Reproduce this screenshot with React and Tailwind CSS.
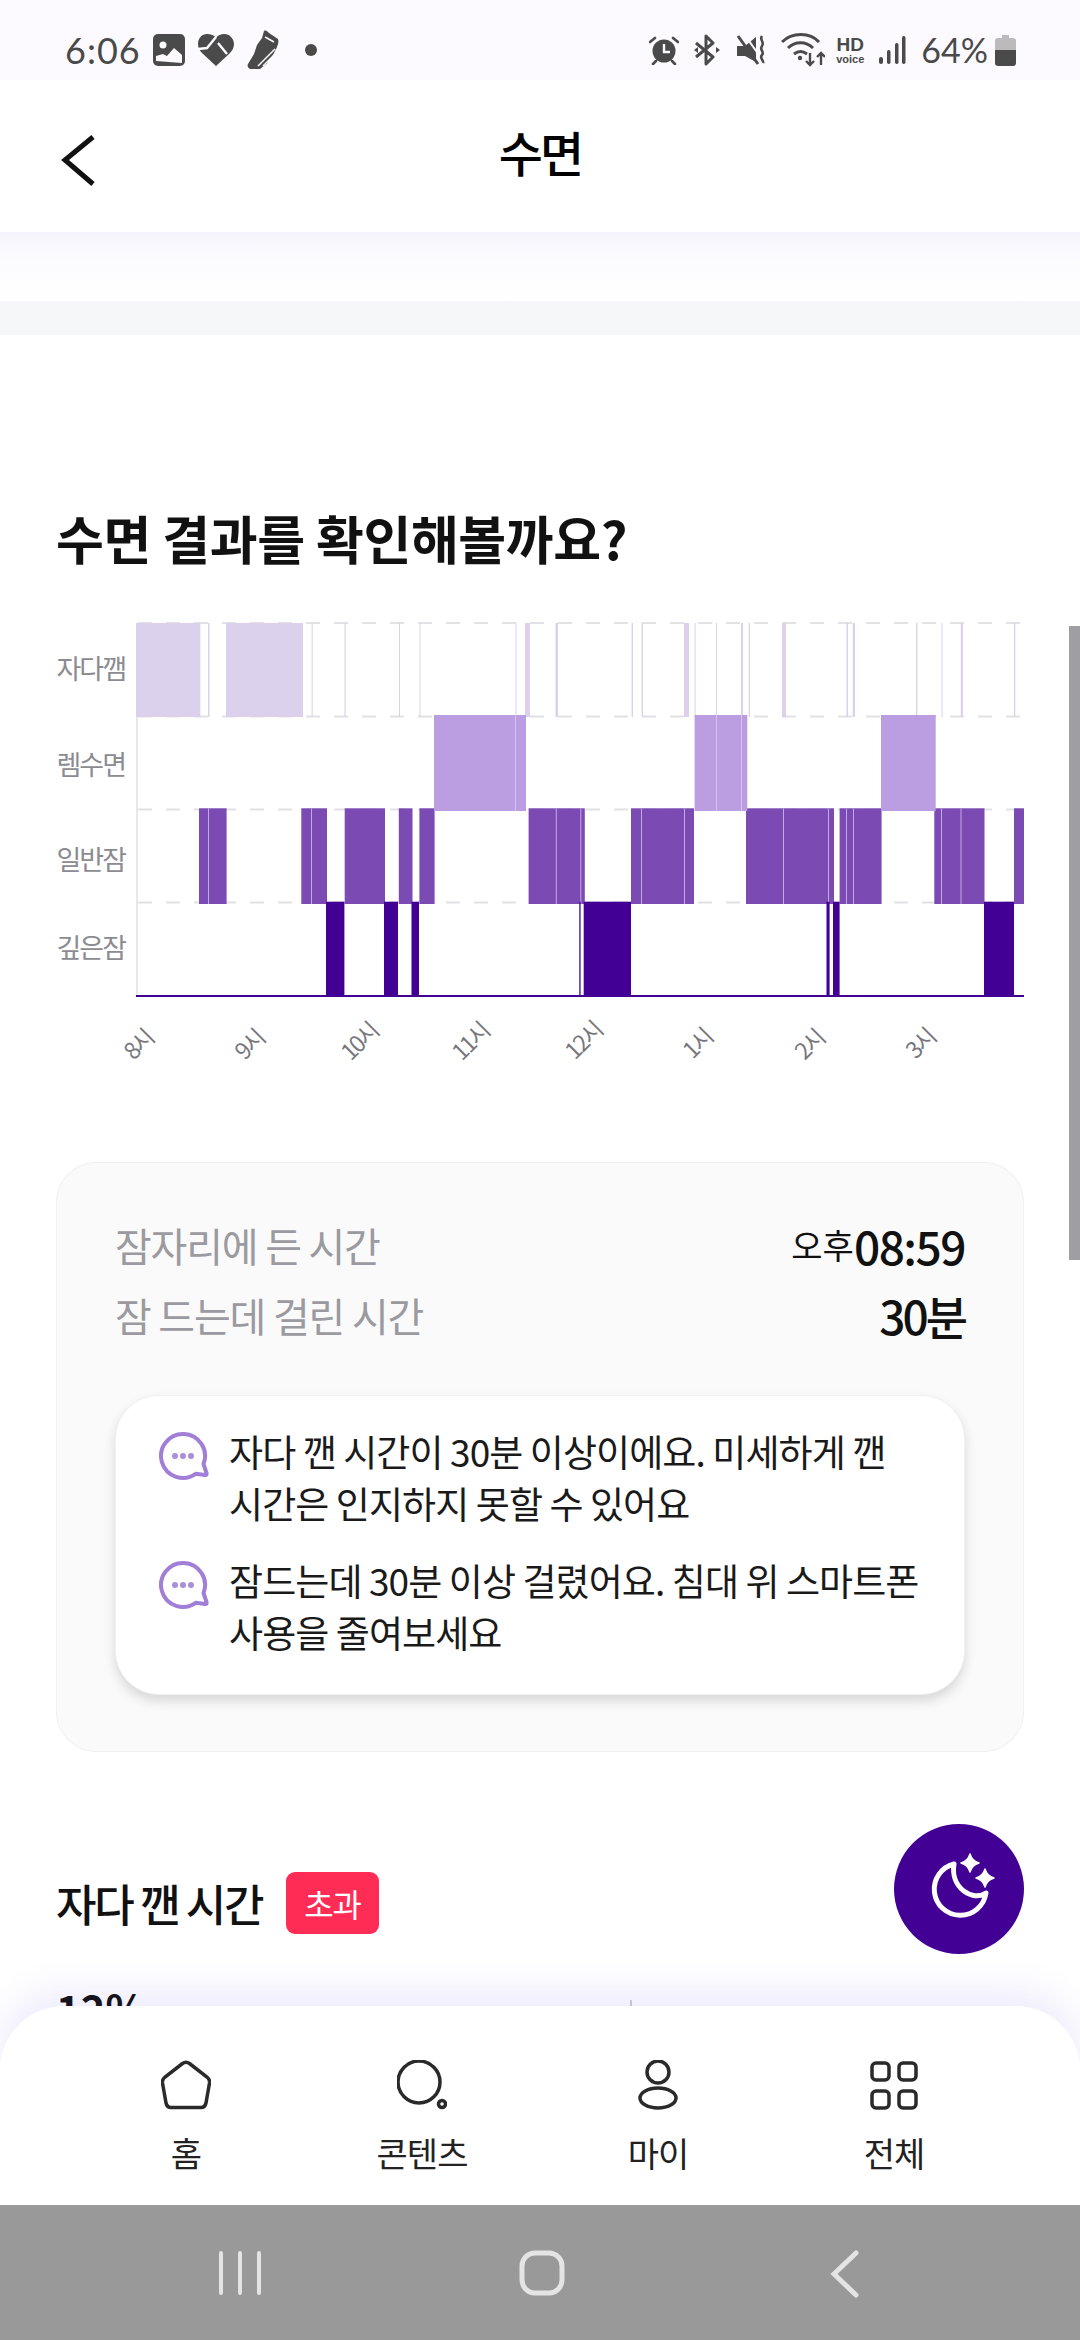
const FONT = "font-['Noto_Sans_CJK_KR',_'Noto_Sans',_sans-serif]";

const grid = [623, 716.5, 809.5, 902.5];

const awake = [
  [136, 200.4], [208, 209.5], [226, 303], [311.6, 312.7], [344.5, 345.7], [399, 400], [419.5, 420.5],
  [515.5, 516.5], [525, 530], [555.5, 558], [631.6, 633], [641.6, 643], [684, 689], [694.6, 695.6],
  [716, 717], [741, 743], [748.7, 750], [782, 786], [846.5, 848], [852.7, 855], [916, 917.4],
  [941.5, 942.5], [960.8, 963], [1014, 1015.3],
];
const rem = [[434, 526], [694.6, 747.3], [881, 935.7]];
const remLines = [515, 716, 741];
const light = [
  [199, 226.6], [301.3, 327], [344.7, 385], [398.8, 412.5], [419.4, 434.6], [528.6, 584.8], [631, 694],
  [746, 834], [839.6, 881.6], [934.3, 984.5], [1014, 1024],
];
const lightLines = [208, 311, 555.8, 580.3, 641, 684, 783, 828, 846, 853, 941, 960.5];
const deep = [
  [326, 344.4], [384, 398], [411.5, 419], [579.3, 580.6], [583.7, 631], [826.5, 829.6], [833, 839.6], [984, 1014],
];

const hours = [
  ["8시", 140, 1046], ["9시", 251, 1046], ["10시", 361, 1043], ["11시", 472, 1043],
  ["12시", 585, 1042], ["1시", 699, 1045], ["2시", 811, 1046], ["3시", 922, 1045],
];

const yLabels = [["자다깸", 669], ["렘수면", 765], ["일반잠", 860], ["깊은잠", 948]];

const SleepChart = () => (
  <svg width="968" height="500" viewBox="56 600 968 500" className="block">
    {yLabels.map(([t, y]) => (
      <text key={t} x="125" y={y + 10} textAnchor="end" fontSize="27" letterSpacing="-2" fill="#8b8b91">
        {t}
      </text>
    ))}
    {grid.map((y) => (
      <line key={y} x1="138" x2="1024" y1={y} y2={y} stroke="#e2e2e5" strokeWidth="2" strokeDasharray="14 14" />
    ))}
    <rect x="136" y="623" width="2" height="373" fill="#e8e8ec" />
    {awake.map(([a, b]) => (
      <rect key={a} x={a} y="623" width={b - a} height="94" fill="#dcd1ec" />
    ))}
    {light.map(([a, b]) => (
      <rect key={a} x={a} y="808.3" width={b - a} height="95.7" fill="#7b4bb3" />
    ))}
    {lightLines.map((x) => (
      <rect key={x} x={x} y="808.3" width="1" height="95.7" fill="#c4a8e6" />
    ))}
    {rem.map(([a, b]) => (
      <rect key={a} x={a} y="715" width={b - a} height="96" fill="#bb9ee2" />
    ))}
    {remLines.map((x) => (
      <rect key={x} x={x} y="715" width="1" height="96" fill="#d6c4ef" />
    ))}
    {deep.map(([a, b]) => (
      <rect key={a} x={a} y="901.7" width={b - a} height="94.3" fill="#430095" />
    ))}
    <rect x="136" y="995" width="888" height="2" fill="#430095" />
    {hours.map(([t, x, y]) => (
      <text
        key={t}
        x={x}
        y={y}
        transform={`rotate(-45 ${x} ${y})`}
        textAnchor="middle"
        dominantBaseline="middle"
        fontSize="23"
        letterSpacing="-2"
        fill="#77777d"
      >
        {t}
      </text>
    ))}
  </svg>
);

const ChatIcon = () => (
  <svg width="52" height="50" viewBox="0 0 52 50" fill="none" className="shrink-0 mt-[6px]">
    <path
      d="M38 42.7A22 22 0 1 1 45.5 33L48.5 42Q49 44.5 47 44Z"
      stroke="#a27fd6"
      strokeWidth="4"
      strokeLinejoin="round"
    />
    <circle cx="17" cy="25" r="3" fill="#a98ed8" />
    <circle cx="25" cy="25" r="3" fill="#a98ed8" />
    <circle cx="33" cy="25" r="3" fill="#a98ed8" />
  </svg>
);

const Message = ({ children }) => (
  <div className="flex gap-[19px]">
    <ChatIcon />
    <p className="text-[37px] leading-[52px] tracking-[-0.9px] text-[#1a1a1a]">{children}</p>
  </div>
);

const StatusIcons = () => (
  <div className="flex items-center h-[80px] pt-[20px] pl-[65px] pr-[64px] bg-[#fcfaff] text-[#4a4a4a]">
    <span className="font-['Lato',_sans-serif] text-[36px] leading-none tracking-[1px] w-[76px]">6:06</span>
    <svg width="32" height="32" viewBox="0 0 32 32" className="ml-[12px]">
      <rect width="32" height="32" rx="5" fill="#4a4a4a" />
      <circle cx="10" cy="11" r="3.5" fill="#fcfaff" />
      <path d="M3 27v-5l7-2 4 2 7-8 8 7v8Z" fill="#fcfaff" />
    </svg>
    <svg width="36" height="32" viewBox="0 0 36 32" className="ml-[13px]">
      <path d="M9 0c4 0 7 1 9 4 2-3 5-4 8-4 6 0 10 5 10 10 0 4-2 7-5 10L18 32 4 19C1 16 0 13 0 10 0 4 4 0 9 0Z" fill="#4a4a4a" />
      <path d="M18 3 9 14 0 15M20 9l9 11" stroke="#fcfaff" strokeWidth="2.4" fill="none" />
    </svg>
    <svg width="32" height="40" viewBox="0 0 32 40" className="ml-[13px]">
      <path d="M17 1c2-1 3 0 5 2l9 6c1 3 0 5-1 8l-7 14-10 8H3c-2-1-3-3-2-5l6-10 3-9 5-7Z" fill="#4a4a4a" />
      <path d="M11 36 28 19M16 36l13-13M21 33l6-6M18 7l9 5" stroke="#fcfaff" strokeWidth="1.5" />
    </svg>
    <span className="ml-[26px] w-[12px] h-[12px] rounded-full bg-[#4a4a4a]" />

    <svg width="30" height="30" viewBox="0 0 30 30" className="ml-auto">
      <circle cx="15" cy="16" r="11.5" fill="#4a4a4a" />
      <path d="M15 9v8h6" stroke="#fcfaff" strokeWidth="2.4" fill="none" />
      <path d="M1 7l5-4M29 7l-5-4M7 26l-3 3M23 26l3 3" stroke="#4a4a4a" strokeWidth="2.6" strokeLinecap="round" />
    </svg>
    <svg width="26" height="32" viewBox="0 0 26 32" fill="none" className="ml-[15px]">
      <path d="M2 9l17 14-7 7V2l7 7L2 23" stroke="#4a4a4a" strokeWidth="3" strokeLinejoin="round" />
      <path d="M0 16l4-3v6ZM26 16l-4-3v6Z" fill="#4a4a4a" />
    </svg>
    <svg width="30" height="30" viewBox="0 0 30 30" fill="none" className="ml-[16px]">
      <path d="M1 11h8l11-9v25l-11-6H1Z" fill="#4a4a4a" />
      <path d="M5 0 25 28" stroke="#fcfaff" strokeWidth="2" transform="translate(3 -1)" />
      <path d="M2 1 22 29" stroke="#4a4a4a" strokeWidth="3" />
      <path d="M26 1c-3 4 3 6 0 10s3 6 0 9 2 5 1 8" stroke="#4a4a4a" strokeWidth="2.6" />
    </svg>
    <svg width="44" height="34" viewBox="0 0 44 34" fill="none" className="ml-[15px]">
      <path d="M1 9C11-1 29-1 38 9M7 15c7-7 18-7 25 0M13 21c4-3 9-3 13 0" stroke="#4a4a4a" strokeWidth="3" />
      <circle cx="19" cy="25" r="2.2" fill="#4a4a4a" />
      <path d="M29 20v12M25 28l4 4 4-4M40 32V20M36 24l4-4 4 4" stroke="#4a4a4a" strokeWidth="2.4" />
    </svg>
    <div className="ml-[9px] w-[32px] flex flex-col items-center font-['Liberation_Sans',_sans-serif] font-bold leading-none">
      <span className="text-[19px] h-[18px] tracking-[0px]">HD</span>
      <span className="text-[11px] h-[12px] mt-[1px]">voice</span>
    </div>
    <svg width="27" height="28" viewBox="0 0 27 28" className="ml-[13px]">
      <rect x="0" y="21" width="4" height="7" rx="2" fill="#4a4a4a" />
      <rect x="8" y="14" width="3.5" height="14" rx="1.7" fill="#4a4a4a" />
      <rect x="16" y="7" width="3.5" height="21" rx="1.7" fill="#4a4a4a" />
      <rect x="23" y="0" width="3.5" height="28" rx="1.7" fill="#4a4a4a" />
    </svg>
    <span className="ml-[15px] font-['Lato',_sans-serif] text-[34px] leading-none">64%</span>
    <svg width="21" height="31" viewBox="0 0 21 31" className="ml-[7px]">
      <path d="M7 0h7v3h4a3 3 0 0 1 3 3v9H0V6a3 3 0 0 1 3-3h4Z" fill="#bdbabd" />
      <path d="M0 15h21v13a3 3 0 0 1-3 3H3a3 3 0 0 1-3-3Z" fill="#4a4a4a" />
    </svg>
  </div>
);

const navItems = [
  {
    label: "홈",
    icon: <path d="M21.5 3.5Q25 1 28.5 3.5L46 17Q49 19.5 48.5 23L45 43Q44 47.5 40 47.5H10Q6 47.5 5 43L1.500 23Q1 19.5 4 17Z" />,
  },
  {
    label: "콘텐츠",
    icon: (
      <>
        <circle cx="22" cy="22" r="21" />
        <circle cx="45" cy="44" r="3.500" />
      </>
    ),
  },
  {
    label: "마이",
    icon: (
      <>
        <circle cx="25" cy="12" r="11" />
        <ellipse cx="25" cy="38" rx="18" ry="10" />
      </>
    ),
  },
  {
    label: "전체",
    icon: (
      <>
        <rect x="3" y="3" width="17" height="17" rx="4" />
        <rect x="30" y="3" width="17" height="17" rx="4" />
        <rect x="3" y="31" width="17" height="17" rx="4" />
        <rect x="30" y="31" width="17" height="17" rx="4" />
      </>
    ),
  },
];

export default function App() {
  return (
    <div className={`relative w-[1080px] h-[2340px] overflow-hidden bg-white ${FONT}`}>
      <StatusIcons />

      {/* header */}
      <div className="relative flex items-center justify-center h-[152px] bg-white">
        <svg width="36" height="52" viewBox="0 0 36 52" fill="none" className="absolute left-[61px] top-[55px]">
          <path d="M32 2 4 25l28 24" stroke="#111" strokeWidth="5" />
        </svg>
        <h1 className="text-[48px] font-medium tracking-[-2.8px] text-black -mt-[10px]">수면</h1>
      </div>
      <div className="h-[69px] bg-gradient-to-b from-[#f5f4fc] via-[#fcfcff] via-40% to-white" />
      <div className="h-[34px] bg-[#f6f7f9]" />

      <main className="px-[56px] pt-[173px]">
        <h2 className="text-[52px] leading-[60px] font-semibold tracking-[-0.4px] text-[#111]">
          수면 결과를 확인해볼까요?
        </h2>
        <div className="mt-[32px]">
          <SleepChart />
        </div>

        <section className="mt-[62px] h-[590px] rounded-[40px] border border-[#f0f0f2] bg-[#fafafa] px-[58px] pt-[47px]">
          <div className="flex items-center justify-between h-[70px]">
            <span className="text-[40px] tracking-[-1.2px] text-[#9a9aa0]">잠자리에 든 시간</span>
            <span className="flex items-baseline text-[#111]">
              <span className="text-[34px] -translate-y-[6px]">오후</span>
              <span className="text-[46px] font-medium tracking-[-1.5px]">08:59</span>
            </span>
          </div>
          <div className="flex items-center justify-between h-[70px]">
            <span className="text-[40px] tracking-[-1.2px] text-[#9a9aa0]">잠 드는데 걸린 시간</span>
            <span className="text-[46px] font-medium tracking-[-3px] text-[#111]">30분</span>
          </div>

          <div className="mt-[45px] h-[300px] rounded-[44px] bg-white border border-[#f2f2f4] shadow-[0_6px_12px_rgba(0,0,0,0.14)] pl-[42px] pr-[20px] pt-[29px] flex flex-col gap-[25px]">
            <Message>
              자다 깬 시간이 30분 이상이에요. 미세하게 깬
              <br />
              시간은 인지하지 못할 수 있어요
            </Message>
            <Message>
              잠드는데 30분 이상 걸렸어요. 침대 위 스마트폰
              <br />
              사용을 줄여보세요
            </Message>
          </div>
        </section>

        <div className="mt-[120px] flex items-center gap-[24px] h-[62px]">
          <h3 className="text-[44px] font-medium tracking-[-2.3px] text-[#111]">자다 깬 시간</h3>
          <span className="flex items-center justify-center w-[93px] h-[62px] rounded-[9px] bg-[#ff2d55] text-white text-[32px] tracking-[-1px]">
            초과
          </span>
        </div>
        <div className="mt-[49px] flex items-start">
          <span className="w-[574px] text-[42px] leading-[50px] font-bold text-[#111]">12%</span>
          <span className="mt-[17px] w-[2px] h-[12px] bg-[#cfcfd4]" />
        </div>
      </main>

      {/* scrollbar */}
      <div className="absolute right-0 top-[626px] w-[11px] h-[634px] bg-[#9e9ea3]" />

      {/* sleep button */}
      <button className="absolute left-[894px] top-[1824px] flex items-center justify-center w-[130px] h-[130px] rounded-full bg-[#430095]">
        <svg width="66" height="66" viewBox="0 0 66 66" fill="none" className="overflow-visible">
          <path
            d="M28 8A26 26 0 1 0 60 37C47 46 24 32 28 8Z"
            stroke="#fff"
            strokeWidth="5"
            strokeLinejoin="round"
          />
          <path d="M44-2Q46 5 53 7 46 9 44 16 42 9 35 7 42 5 44-2Z" fill="#fff" stroke="#fff" strokeWidth="1.500" strokeLinejoin="round" />
          <path d="M59 13Q61 20 68 22 61 24 59 31 57 24 50 22 57 20 59 13Z" fill="#fff" stroke="#fff" strokeWidth="1.500" strokeLinejoin="round" />
        </svg>
      </button>

      {/* bottom nav */}
      <div className="absolute inset-x-0 bottom-0">
        <nav className="h-[199px] rounded-t-[64px] bg-white shadow-[0_-16px_36px_rgba(90,70,230,0.10)] grid grid-cols-4 px-[68px] pt-[54px]">
          {navItems.map((item) => (
            <div key={item.label} className="flex flex-col items-center">
              <svg width="50" height="50" viewBox="0 0 50 50" fill="none" stroke="#2a2a2a" strokeWidth="3.500">
                {item.icon}
              </svg>
              <span className="mt-[18px] text-[34px] leading-[50px] tracking-[-1px] text-[#222]">{item.label}</span>
            </div>
          ))}
        </nav>
        <div className="relative flex h-[135px] items-center bg-[#999999]">
          <svg width="44" height="44" viewBox="0 0 44 44" className="absolute left-[218px] top-[46px]" stroke="#e4e4e4" strokeWidth="4" strokeLinecap="round">
            <path d="M3 2v40M22 2v40M41 2v40" />
          </svg>
          <svg width="46" height="46" viewBox="0 0 46 46" fill="none" className="absolute left-[519px] top-[45px]" stroke="#e4e4e4" strokeWidth="5">
            <rect x="3" y="3" width="40" height="40" rx="13" />
          </svg>
          <svg width="30" height="48" viewBox="0 0 30 48" fill="none" className="absolute left-[830px] top-[45px]" stroke="#e4e4e4" strokeWidth="5" strokeLinecap="round">
            <path d="M26 3 4 24l22 21" />
          </svg>
        </div>
      </div>
    </div>
  );
}
